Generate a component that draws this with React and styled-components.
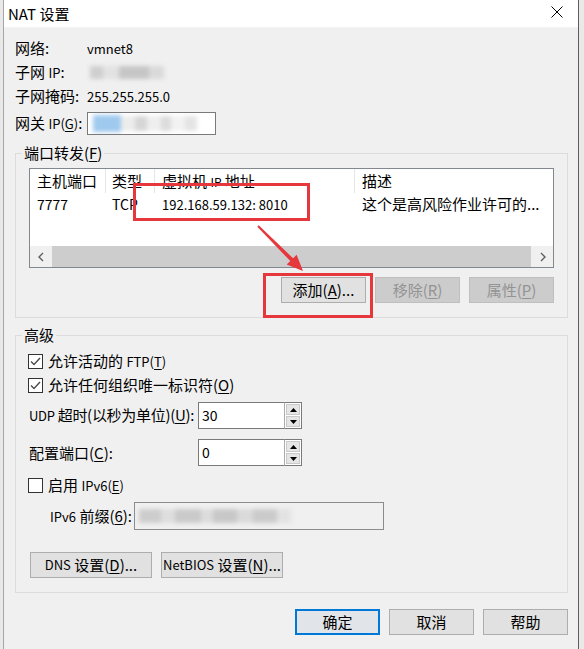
import React from 'react';
import styled, { createGlobalStyle, css } from 'styled-components';

const GlobalStyle = createGlobalStyle`
  html, body { margin: 0; padding: 0; }
  body {
    background: #e6e6e6;
    font-family: "Noto Sans CJK SC", "Noto Sans", sans-serif;
    font-size: 15px;
    color: #000;
  }
  u { text-underline-offset: 2px; }
`;

const Screen = styled.div`
  position: relative;
  display: flex;
  width: 584px;
  height: 649px;
  overflow: hidden;
  background: #e9e9e9;
`;

const Dialog = styled.div`
  width: 576px;
  height: 649px;
  margin-left: 3px;
  box-sizing: border-box;
  border-left: 1px solid #a6a6a6;
  border-right: 1px solid #5c5c5c;
  background: #f0f0f0;
  display: flex;
  flex-direction: column;
`;

const TitleBar = styled.div`
  height: 28px;
  flex: none;
  background: #fff;
  display: flex;
  align-items: center;
  justify-content: space-between;
  padding-left: 4px;
  border-bottom: 1px solid #f4f4f4;
  box-sizing: border-box;
`;

const Title = styled.div`
  font-size: 15px;
  line-height: 20px;
`;

const Close = styled.div`
  width: 42px;
  height: 24px;
  align-self: flex-start;
  display: flex;
  align-items: center;
  justify-content: center;
`;

const Body = styled.div`
  padding: 8px 10px 0 11px;
  display: flex;
  flex-direction: column;
`;

const InfoGrid = styled.div`
  display: grid;
  grid-template-columns: 72px auto;
  grid-template-rows: 24px 24px 24px 27px;
  align-items: center;
  line-height: 20px;
`;

const InfoLabel = styled.div`
  align-self: ${({ $end }) => ($end ? 'end' : 'center')};
  line-height: ${({ $end }) => ($end ? '23px' : '20px')};
  white-space: nowrap;
`;

const Latin = styled.span`
  font-size: ${({ $size = 13 }) => $size}px;
`;

const TextInput = styled.div`
  align-self: end;
  width: ${({ $w }) => $w}px;
  height: ${({ $h = 23 }) => $h}px;
  box-sizing: border-box;
  border: 1px solid ${({ $disabled }) => ($disabled ? '#8c8c8c' : '#7a7a7a')};
  background: ${({ $disabled }) => ($disabled ? '#f0f0f0' : '#fff')};
  display: flex;
  align-items: center;
  padding-left: 3px;
  overflow: hidden;
`;

const Blur = styled.div`
  display: flex;
  align-items: center;
  filter: blur(2px);
  margin-left: ${({ $ml = 0 }) => $ml}px;
`;

const Smudge = styled.span`
  display: block;
  width: ${({ $w }) => $w}px;
  height: ${({ $h = 13 }) => $h}px;
  background: ${({ $c }) => $c};
`;

const Group = styled.fieldset`
  margin: ${({ $top }) => $top}px 0 0 0;
  padding: 0;
  border: 1px solid #dcdcdc;
  min-width: 0;
  display: flex;
  flex-direction: column;
`;

const Legend = styled.legend`
  margin-left: 6px;
  padding: 0 2px;
  line-height: 20px;
  font-size: 15px;
`;

const ListView = styled.div`
  margin: 5px 13px 0 13px;
  height: 100px;
  box-sizing: border-box;
  border: 1px solid #828790;
  background: #fff;
  display: flex;
  flex-direction: column;
  overflow: hidden;
`;

const ListRow = styled.div`
  display: grid;
  grid-template-columns: 76px 49px 200px 1fr;
  height: ${({ $h }) => $h}px;
  line-height: ${({ $h }) => $h}px;
  ${({ $header }) =>
    $header &&
    css`
      & > div:not(:last-child) { border-right: 1px solid #e5e5e5; }
    `}
`;

const Cell = styled.div`
  padding-left: ${({ $pl = 7 }) => $pl}px;
  white-space: nowrap;
  overflow: hidden;
`;

const ListFill = styled.div`
  flex: 1;
`;

const HScroll = styled.div`
  height: 21px;
  flex: none;
  display: flex;
  background: #f0f0f0;
`;

const ScrollArrow = styled.div`
  width: 21px;
  display: flex;
  align-items: center;
  justify-content: center;
`;

const ScrollThumb = styled.div`
  flex: 1;
  background: #cdcdcd;
  margin: 0 1px;
`;

const ButtonRow = styled.div`
  display: flex;
  justify-content: ${({ $start }) => ($start ? 'flex-start' : 'flex-end')};
  gap: 9px;
  margin: ${({ $m }) => $m};
`;

const Button = styled.div`
  width: ${({ $w = 85 }) => $w}px;
  height: 26px;
  box-sizing: border-box;
  border: 1px solid #adadad;
  background: #e1e1e1;
  display: flex;
  align-items: center;
  justify-content: center;
  line-height: 20px;
  white-space: nowrap;
  ${({ $disabled }) =>
    $disabled &&
    css`
      background: #cccccc;
      border-color: #bfbfbf;
      color: #939393;
    `}
  ${({ $default }) =>
    $default &&
    css`
      border: 2px solid #0078d7;
      background: #e1e4e8;
    `}
`;

const CheckRow = styled.div`
  display: flex;
  align-items: center;
  gap: 5px;
  height: 24px;
  padding-left: 12px;
  margin-top: ${({ $top = 0 }) => $top}px;
  line-height: 20px;
  white-space: nowrap;
`;

const Box = styled.div`
  width: 15px;
  height: 15px;
  box-sizing: border-box;
  border: 1px solid #333;
  background: #fff;
  display: flex;
  align-items: center;
  justify-content: center;
`;

const FieldRow = styled.div`
  display: grid;
  grid-template-columns: ${({ $col }) => $col}px auto;
  align-items: center;
  padding-left: ${({ $pl = 13 }) => $pl}px;
  margin-top: ${({ $top = 0 }) => $top}px;
  line-height: 20px;
  white-space: nowrap;
  letter-spacing: ${({ $tight }) => ($tight ? '-0.3px' : 'normal')};
`;

const Spin = styled.div`
  display: flex;
  width: 104px;
  height: 27px;
  letter-spacing: normal;
`;

const SpinInput = styled.div`
  flex: 1;
  box-sizing: border-box;
  border: 1px solid #7a7a7a;
  border-right: none;
  background: #fff;
  padding: 2px 0 0 3px;
  line-height: 20px;
`;

const SpinButtons = styled.div`
  width: 18px;
  display: flex;
  flex-direction: column;
  box-sizing: border-box;
  border: 1px solid #7a7a7a;
  border-left: 1px solid #ababab;
  background: #fff;
  padding: 1px;
  gap: 1px;
`;

const SpinBtn = styled.div`
  flex: 1;
  background: #e5e5e5;
  border: 1px solid #c9c9c9;
  display: flex;
  align-items: center;
  justify-content: center;
`;

const Footer = styled.div`
  display: flex;
  justify-content: flex-end;
  gap: 9px;
  margin-top: 16px;
`;

const Overlay = styled.svg`
  position: absolute;
  left: 0;
  top: 0;
  pointer-events: none;
`;

const Check = ({ checked }) => (
  <Box>
    {checked && (
      <svg width="13" height="13" viewBox="0 0 13 13">
        <polyline points="2,6.5 5,9.5 11,3" fill="none" stroke="#4a4a4a" strokeWidth="1.4" />
      </svg>
    )}
  </Box>
);

const Tri = ({ up }) => (
  <svg width="7" height="4" viewBox="0 0 7 4">
    <polygon points={up ? '0,4 7,4 3.5,0' : '0,0 7,0 3.5,4'} fill="#000" />
  </svg>
);

const SpinBox = ({ value }) => (
  <Spin>
    <SpinInput><Latin $size={14}>{value}</Latin></SpinInput>
    <SpinButtons>
      <SpinBtn><Tri up /></SpinBtn>
      <SpinBtn><Tri /></SpinBtn>
    </SpinButtons>
  </Spin>
);

const Chevron = ({ right }) => (
  <svg width="6" height="10" viewBox="0 0 6 10">
    <polyline
      points={right ? '1,1 5,5 1,9' : '5,1 1,5 5,9'}
      fill="none"
      stroke="#606060"
      strokeWidth="1.4"
    />
  </svg>
);

const RED = '#e6373d';

export default function App() {
  return (
    <Screen>
      <GlobalStyle />
      <Dialog>
        <TitleBar>
          <Title>NAT 设置</Title>
          <Close>
            <svg width="12" height="12" viewBox="0 0 12 12">
              <path d="M0.5 0.5 L11.5 11.5 M11.5 0.5 L0.5 11.5" stroke="#000" strokeWidth="1" />
            </svg>
          </Close>
        </TitleBar>
        <Body>
          <InfoGrid>
            <InfoLabel>网络:</InfoLabel>
            <div><Latin>vmnet8</Latin></div>
            <InfoLabel>子网 <Latin>IP</Latin>:</InfoLabel>
            <Blur $ml={3}>
              <Smudge $w={13} $c="#cfcfcf" />
              <Smudge $w={16} $c="#e2e2e2" />
              <Smudge $w={30} $c="#c6c6c6" />
              <Smudge $w={15} $c="#dadada" />
            </Blur>
            <InfoLabel>子网掩码:</InfoLabel>
            <div><Latin>255.255.255.0</Latin></div>
            <InfoLabel $end>网关 <Latin>IP(<u>G</u>)</Latin>:</InfoLabel>
            <TextInput $w={129}>
              <Blur $ml={2}>
                <Smudge $w={28} $h={17} $c="#9fc9ee" />
                <Smudge $w={14} $h={15} $c="#ececec" />
                <Smudge $w={12} $h={15} $c="#d6d6d6" />
                <Smudge $w={14} $h={15} $c="#eeeeee" />
                <Smudge $w={10} $h={15} $c="#dcdcdc" />
                <Smudge $w={14} $h={15} $c="#f2f2f2" />
                <Smudge $w={12} $h={15} $c="#e4e4e4" />
              </Blur>
            </TextInput>
          </InfoGrid>

          <Group $top={8}>
            <Legend>端口转发(<u>F</u>)</Legend>
            <ListView>
              <ListRow $header $h={24}>
                <Cell>主机端口</Cell>
                <Cell $pl={6}>类型</Cell>
                <Cell>虚拟机 <Latin $size={12}>IP</Latin> 地址</Cell>
                <Cell>描述</Cell>
              </ListRow>
              <ListRow $h={22}>
                <Cell><Latin $size={14}>7777</Latin></Cell>
                <Cell $pl={6}><Latin $size={14}>TCP</Latin></Cell>
                <Cell><Latin>192.168.59.132: 8010</Latin></Cell>
                <Cell>这个是高风险作业许可的...</Cell>
              </ListRow>
              <ListFill />
              <HScroll>
                <ScrollArrow><Chevron /></ScrollArrow>
                <ScrollThumb />
                <ScrollArrow><Chevron right /></ScrollArrow>
              </HScroll>
            </ListView>
            <ButtonRow $m="9px 13px 14px 0">
              <Button>添加(<u>A</u>)...</Button>
              <Button $disabled>移除(<u>R</u>)</Button>
              <Button $disabled>属性(<u>P</u>)</Button>
            </ButtonRow>
          </Group>

          <Group $top={7}>
            <Legend>高级</Legend>
            <CheckRow $top={4}>
              <Check checked />
              <span>允许活动的 <Latin>FTP(<u>T</u>)</Latin></span>
            </CheckRow>
            <CheckRow>
              <Check checked />
              <span>允许任何组织唯一标识符(<u>O</u>)</span>
            </CheckRow>
            <FieldRow $col={169} $top={5} $tight>
              <span><Latin>UDP</Latin> 超时(以秒为单位)(<u>U</u>):</span>
              <SpinBox value="30" />
            </FieldRow>
            <FieldRow $col={169} $top={10}>
              <span>配置端口(<u>C</u>):</span>
              <SpinBox value="0" />
            </FieldRow>
            <CheckRow $top={7}>
              <Check />
              <span>启用 <Latin>IPv6(<u>E</u>)</Latin></span>
            </CheckRow>
            <FieldRow $col={84} $pl={34} $top={5}>
              <span><Latin>IPv6</Latin> 前缀(<u>6</u>):</span>
              <TextInput $w={250} $h={28} $disabled>
                <Blur $ml={1}>
                  <Smudge $w={22} $h={14} $c="#cdcdcd" />
                  <Smudge $w={14} $h={14} $c="#dedede" />
                  <Smudge $w={26} $h={14} $c="#cacaca" />
                  <Smudge $w={12} $h={14} $c="#dcdcdc" />
                  <Smudge $w={24} $h={14} $c="#c8c8c8" />
                  <Smudge $w={16} $h={14} $c="#dadada" />
                  <Smudge $w={24} $h={14} $c="#cbcbcb" />
                  <Smudge $w={14} $h={14} $c="#e2e2e2" />
                </Blur>
              </TextInput>
            </FieldRow>
            <ButtonRow $start $m="22px 0 14px 14px">
              <Button $w={122}><Latin>DNS</Latin>&nbsp;设置(<u>D</u>)...</Button>
              <Button $w={122}><Latin>NetBIOS</Latin>&nbsp;设置(<u>N</u>)...</Button>
            </ButtonRow>
          </Group>

          <Footer>
            <Button $default>确定</Button>
            <Button>取消</Button>
            <Button>帮助</Button>
          </Footer>
        </Body>
      </Dialog>

      <Overlay width="584" height="649" viewBox="0 0 584 649">
        <rect x="134.5" y="184.5" width="174" height="35" fill="none" stroke={RED} strokeWidth="3" />
        <rect x="264.5" y="274.5" width="107" height="42" fill="none" stroke={RED} strokeWidth="3" />
        <polygon
          points="257.3,226.7 290.3,261.1 286.7,264.6 303,271 296.6,254.7 293.1,258.3 258.7,225.3"
          fill={RED}
        />
      </Overlay>
    </Screen>
  );
}
